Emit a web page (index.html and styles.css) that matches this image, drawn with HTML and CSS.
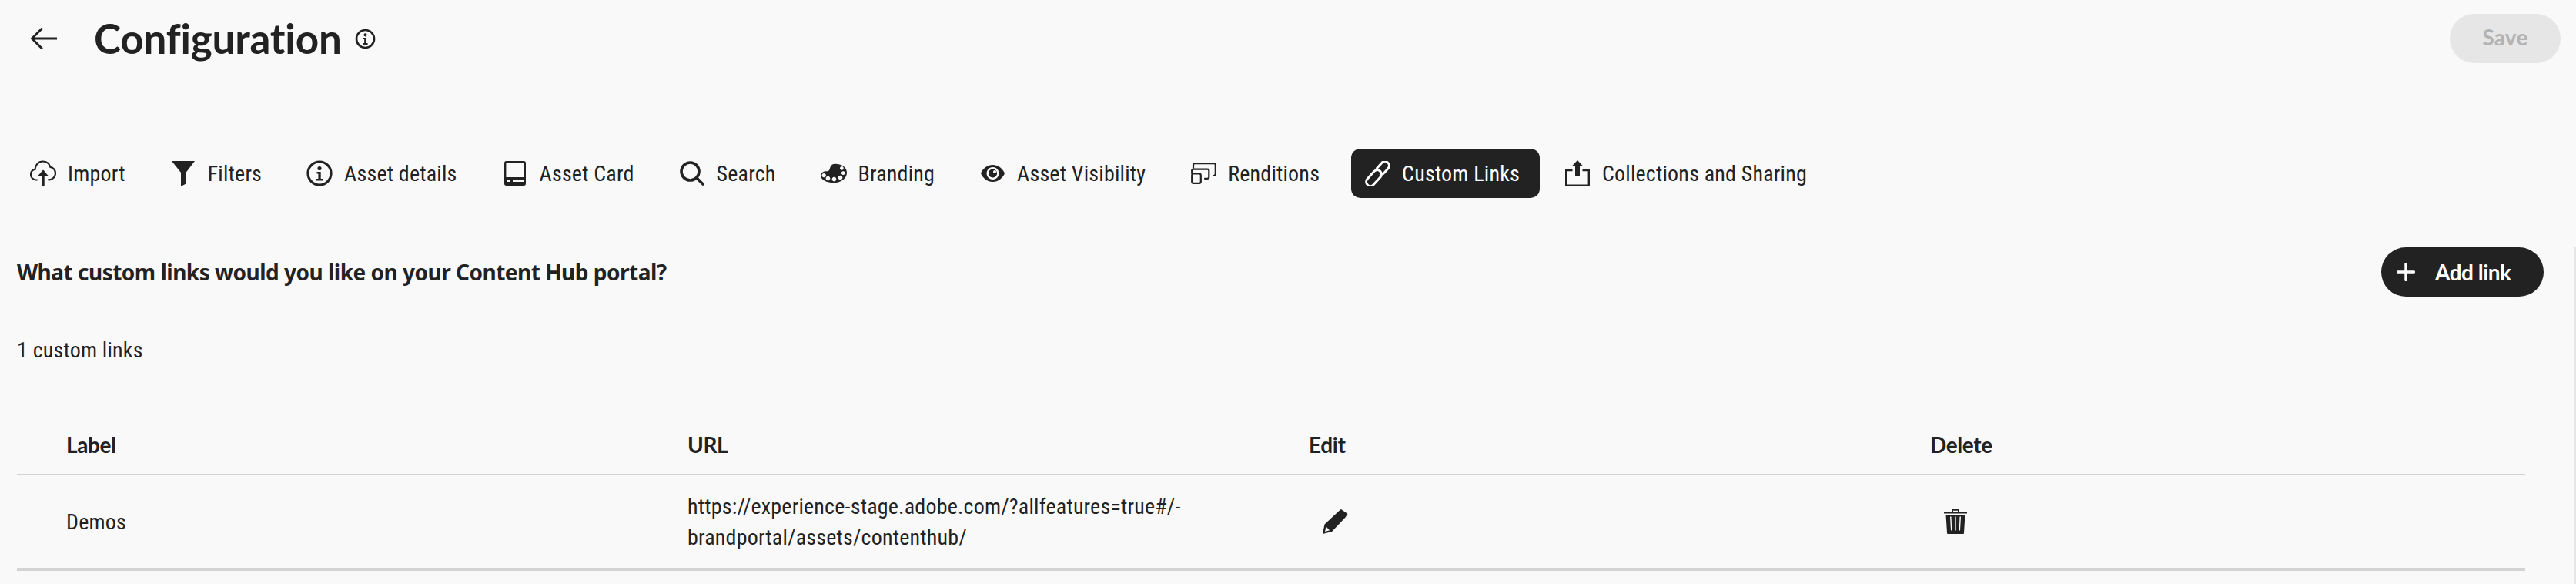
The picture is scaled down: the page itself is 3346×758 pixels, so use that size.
FILE: index.html
```html
<!DOCTYPE html>
<html lang="en">
<head>
<meta charset="utf-8">
<title>Configuration</title>
<link rel="stylesheet" href="styles.css">
</head>
<body>
<header class="page-head">
  <svg class="back" width="34" height="28" viewBox="0 0 34 28"><path d="M34 14H2M14 1.5 1.5 14 14 26.5" fill="none" stroke="#222" stroke-width="3" stroke-linecap="round" stroke-linejoin="round"/></svg>
  <h1 class="title">Configuration</h1>
  <svg class="title-info" width="27" height="27" viewBox="0 0 34 34"><circle cx="17" cy="17" r="14.500" fill="none" stroke="#222" stroke-width="3.400"/><circle cx="17" cy="10.500" r="2.600" fill="#222"/><path d="M13.500 15h5v9h2.400v2.400h-8V24h2.400v-6.600h-1.800z" fill="#222"/></svg>
  <button class="save">Save</button>
</header>

<nav class="tabs">
  <a class="tab"><span class="tab-icon"><svg width="34" height="34" viewBox="0 0 34 34"><path d="M9 25.500H7.500C3.500 25 1 22 1 18.500c0-3.500 2.300-6 5.500-6.700C6.800 6 11 1.500 16.500 1.500c4.800 0 8.500 2.800 9.800 7.300 3.800.6 6.700 3.900 6.700 8 0 4.500-3.300 8-7.500 8.500H24" fill="none" stroke="#222" stroke-width="2.200" stroke-linecap="round"/><path d="M17 34V15" stroke="#222" stroke-width="3.400" stroke-linecap="round"/><path d="M10.500 20 17 12.500 23.500 20z" fill="#222"/></svg></span><span class="tab-label">Import</span></a>
  <a class="tab"><span class="tab-icon"><svg width="30" height="33" viewBox="0 0 30 33"><path d="M0 0H30L18.500 15V29.500L12 33V15z" fill="#222"/></svg></span><span class="tab-label">Filters</span></a>
  <a class="tab"><span class="tab-icon"><svg width="34" height="34" viewBox="0 0 34 34"><circle cx="17" cy="17" r="15" fill="none" stroke="#222" stroke-width="3.200"/><circle cx="17" cy="10.500" r="2.600" fill="#222"/><path d="M13.500 15h5.200v9h2.300v2.400h-8V24h2.400v-6.600h-1.900z" fill="#222"/></svg></span><span class="tab-label">Asset details</span></a>
  <a class="tab"><span class="tab-icon"><svg width="28" height="32" viewBox="0 0 28 32"><rect x="1.200" y="1.200" width="25.600" height="29.600" rx="1.500" fill="none" stroke="#222" stroke-width="2.400"/><path d="M1 21h26v10H1z" fill="#222"/><path d="M3 25h5v2H3zM11 25h15v2H11z" fill="#f9f9f9"/></svg></span><span class="tab-label">Asset Card</span></a>
  <a class="tab"><span class="tab-icon"><svg width="32" height="32" viewBox="0 0 32 32"><circle cx="13.500" cy="13.500" r="11.500" fill="none" stroke="#222" stroke-width="3.600"/><path d="M22 22 30 30" stroke="#222" stroke-width="3.600" stroke-linecap="round"/></svg></span><span class="tab-label">Search</span></a>
  <a class="tab"><span class="tab-icon"><svg width="36" height="26" viewBox="0 0 36 26"><path fill-rule="evenodd" d="M20 0c8 0 16 4 16 12 0 8-8 14-18 14C8 26 0 22 0 16c0-4 4-6 8-6 4 0 4-2 5-5 1-3 3-5 7-5zM29 3.500a2.500 2.500 0 1 0 .01 0zM31 10a2.500 2.500 0 1 0 .01 0zM27 16a3 3 0 1 0 .01 0zM18.500 18a3 3 0 1 0 .01 0zM10 17a3 3 0 1 0 .01 0zM4.500 13a2.800 2.800 0 1 0 .01 0z" fill="#222"/></svg></span><span class="tab-label">Branding</span></a>
  <a class="tab"><span class="tab-icon"><svg width="31" height="22" viewBox="0 0 31 22"><path fill-rule="evenodd" d="M15.500 0C23 0 28.500 5 31 11c-2.500 6-8 11-15.500 11S2.500 17 0 11C2.500 5 8 0 15.500 0zM15.500 3a8 8 0 1 0 .01 0z" fill="#222"/><path fill-rule="evenodd" d="M15.500 5.500a5.500 5.500 0 1 0 .01 0zM18 7a2 2 0 1 0 .01 0z" fill="#222"/></svg></span><span class="tab-label">Asset Visibility</span></a>
  <a class="tab"><span class="tab-icon"><svg width="33" height="28" viewBox="0 0 33 28"><path d="M3 7V3a1.800 1.800 0 0 1 1.800-1.800H30A1.800 1.800 0 0 1 31.800 3V14.500C31.800 16 31 17 29.500 17" fill="none" stroke="#222" stroke-width="2.200" stroke-linecap="round"/><path d="M1.200 14V10.500A1.800 1.800 0 0 1 3 8.700H21.500A1.800 1.800 0 0 1 23.300 10.500V19C23.300 20 22.500 20.800 21 20.800H18" fill="none" stroke="#222" stroke-width="2.200" stroke-linecap="round"/><rect x="1.200" y="14.500" width="11.600" height="12.300" rx="2" fill="none" stroke="#222" stroke-width="2.200"/></svg></span><span class="tab-label">Renditions</span></a>
  <a class="tab tab-active"><span class="tab-icon"><svg width="33" height="33" viewBox="0 0 33 33"><g transform="rotate(-48 16.500 16.500)" fill="none" stroke="#fff" stroke-width="3"><rect x="-3" y="11" width="24" height="11" rx="5.500"/><path d="M20 11H30.500a5.500 5.500 0 0 1 0 11H23.500C20.500 22 19 20.500 18.500 18.500"/></g></svg></span><span class="tab-label">Custom Links</span></a>
  <a class="tab"><span class="tab-icon"><svg width="32" height="34" viewBox="0 0 32 34"><path d="M9.500 13H1.200V32.800H30.800V13H22.500" fill="none" stroke="#222" stroke-width="2.400"/><path d="M16 0 23.500 8H19V21H13V8H8.500z" fill="#222"/></svg></span><span class="tab-label">Collections and Sharing</span></a>
</nav>

<main class="panel">
  <div class="panel-head">
    <h2 class="question">What custom links would you like on your Content Hub portal?</h2>
    <button class="add"><svg width="24" height="24" viewBox="0 0 24 24"><path d="M12 1.500V22.500M1.500 12H22.500" stroke="#fff" stroke-width="3.400" stroke-linecap="round"/></svg><span>Add link</span></button>
  </div>
  <p class="count">1 custom links</p>
  <div class="table">
    <div class="row row-head">
      <div class="cell">Label</div>
      <div class="cell">URL</div>
      <div class="cell">Edit</div>
      <div class="cell">Delete</div>
    </div>
    <div class="row row-data">
      <div class="cell cell-text">Demos</div>
      <div class="cell cell-text">https://experience-stage.adobe.com/?allfeatures=true#/-<br>brandportal/assets/contenthub/</div>
      <div class="cell cell-edit"><svg width="34" height="32" viewBox="0 0 34 32"><path fill-rule="evenodd" d="M25 0 33.500 6 30.500 10.500 13 29 1 32 3.500 19.500 24 .5zM5.500 22.500 4 29 10 27.300z" fill="#222"/></svg></div>
      <div class="cell cell-delete"><svg width="30" height="32" viewBox="0 0 30 32"><path fill-rule="evenodd" d="M10 3V1.500C10 .5 10.500 0 11.500 0h7c1 0 1.500.5 1.500 1.500V3h10v2.600H0V3zM12 3h6V1.800h-6zM2.500 7h25L26 30.500c0 1-.5 1.500-1.500 1.500h-19C4.500 32 4 31.500 4 30.500zM8 9.500 9 27.500h1.300L9.500 9.500zM14.300 9.500V27.500h1.400V9.500zM20.500 9.500 19.700 27.500H21L22 9.500z" fill="#222"/></svg></div>
    </div>
  </div>
</main>
</body>
</html>
```

FILE: styles.css
```css
* { box-sizing: border-box; }
html, body { margin: 0; height: 100%; }
body {
  background: #f9f9f9;
  color: #222;
  font-family: "Roboto", "Noto Sans", sans-serif;
  font-stretch: 87.5%;
  font-size: 28px;
  line-height: 40px;
  letter-spacing: .2px;
  overflow: hidden;
}
button { font: inherit; letter-spacing: inherit; border: 0; }

.page-head {
  display: flex;
  align-items: center;
  height: 64px;
  margin-top: 18px;
  padding: 0 20px 0 40px;
}
.back { flex: none; }
.title {
  margin: 0 0 0 48px;
  font-family: "Lato", sans-serif;
  font-stretch: 100%;
  font-size: 53px;
  line-height: 64px;
  font-weight: 700;
  letter-spacing: -.2px;
}
.title-info { margin-left: 17px; flex: none; }
.save {
  margin-left: auto;
  width: 144px;
  height: 64px;
  border-radius: 32px;
  background: #e6e6e6;
  color: #b3b3b3;
  font-family: "Lato", sans-serif;
  font-weight: 700;
  padding-bottom: 6px;
}

.tabs { display: flex; gap: 15px; margin-top: 111px; padding-left: 22px; }
.tab {
  display: flex;
  align-items: center;
  height: 64px;
  padding: 0 26px 0 17px;
  border-radius: 12px;
  white-space: nowrap;
}
.tab-icon { width: 34px; margin-right: 15px; display: flex; justify-content: center; align-items: center; flex: none; }
.tab-label { padding-top: 2px; }
.tab-active { background: #222; color: #fff; }

.panel { height: 437px; margin-top: 64px; padding-left: 22px; padding-right: 40px; border-right: 2px solid #e6e6e6; }
.panel-head { display: flex; justify-content: space-between; align-items: center; height: 64px; }
.question {
  margin: 0;
  font-family: "Noto Sans", sans-serif;
  font-stretch: 100%;
  font-size: 28px;
  line-height: 40px;
  font-weight: 700;
  letter-spacing: -.5px;
}
.add {
  display: flex;
  align-items: center;
  gap: 26px;
  width: 211px;
  height: 64px;
  padding: 0 0 0 20px;
  border-radius: 32px;
  background: #222;
  color: #fff;
  font-family: "Lato", sans-serif;
  font-weight: 700;
  letter-spacing: -.5px;
}
.count { margin: 50px 0 0; }

.table { margin-top: 81px; margin-right: 24px; }
.row { display: grid; grid-template-columns: repeat(4, 1fr); padding-left: 30px; }
.cell { padding-left: 34px; }
.row-head {
  padding-top: 1px;
  padding-bottom: 18px;
  border-bottom: 2px solid #d3d3d3;
  font-family: "Lato", sans-serif;
  font-weight: 700;
  letter-spacing: -.4px;
}
.row-data { height: 124px; align-items: center; border-bottom: 4px solid #d3d3d3; }
.cell-text { padding-top: 2px; }
.cell-edit svg { display: block; margin-left: 17px; }
.cell-delete svg { display: block; margin-left: 18px; }
```
